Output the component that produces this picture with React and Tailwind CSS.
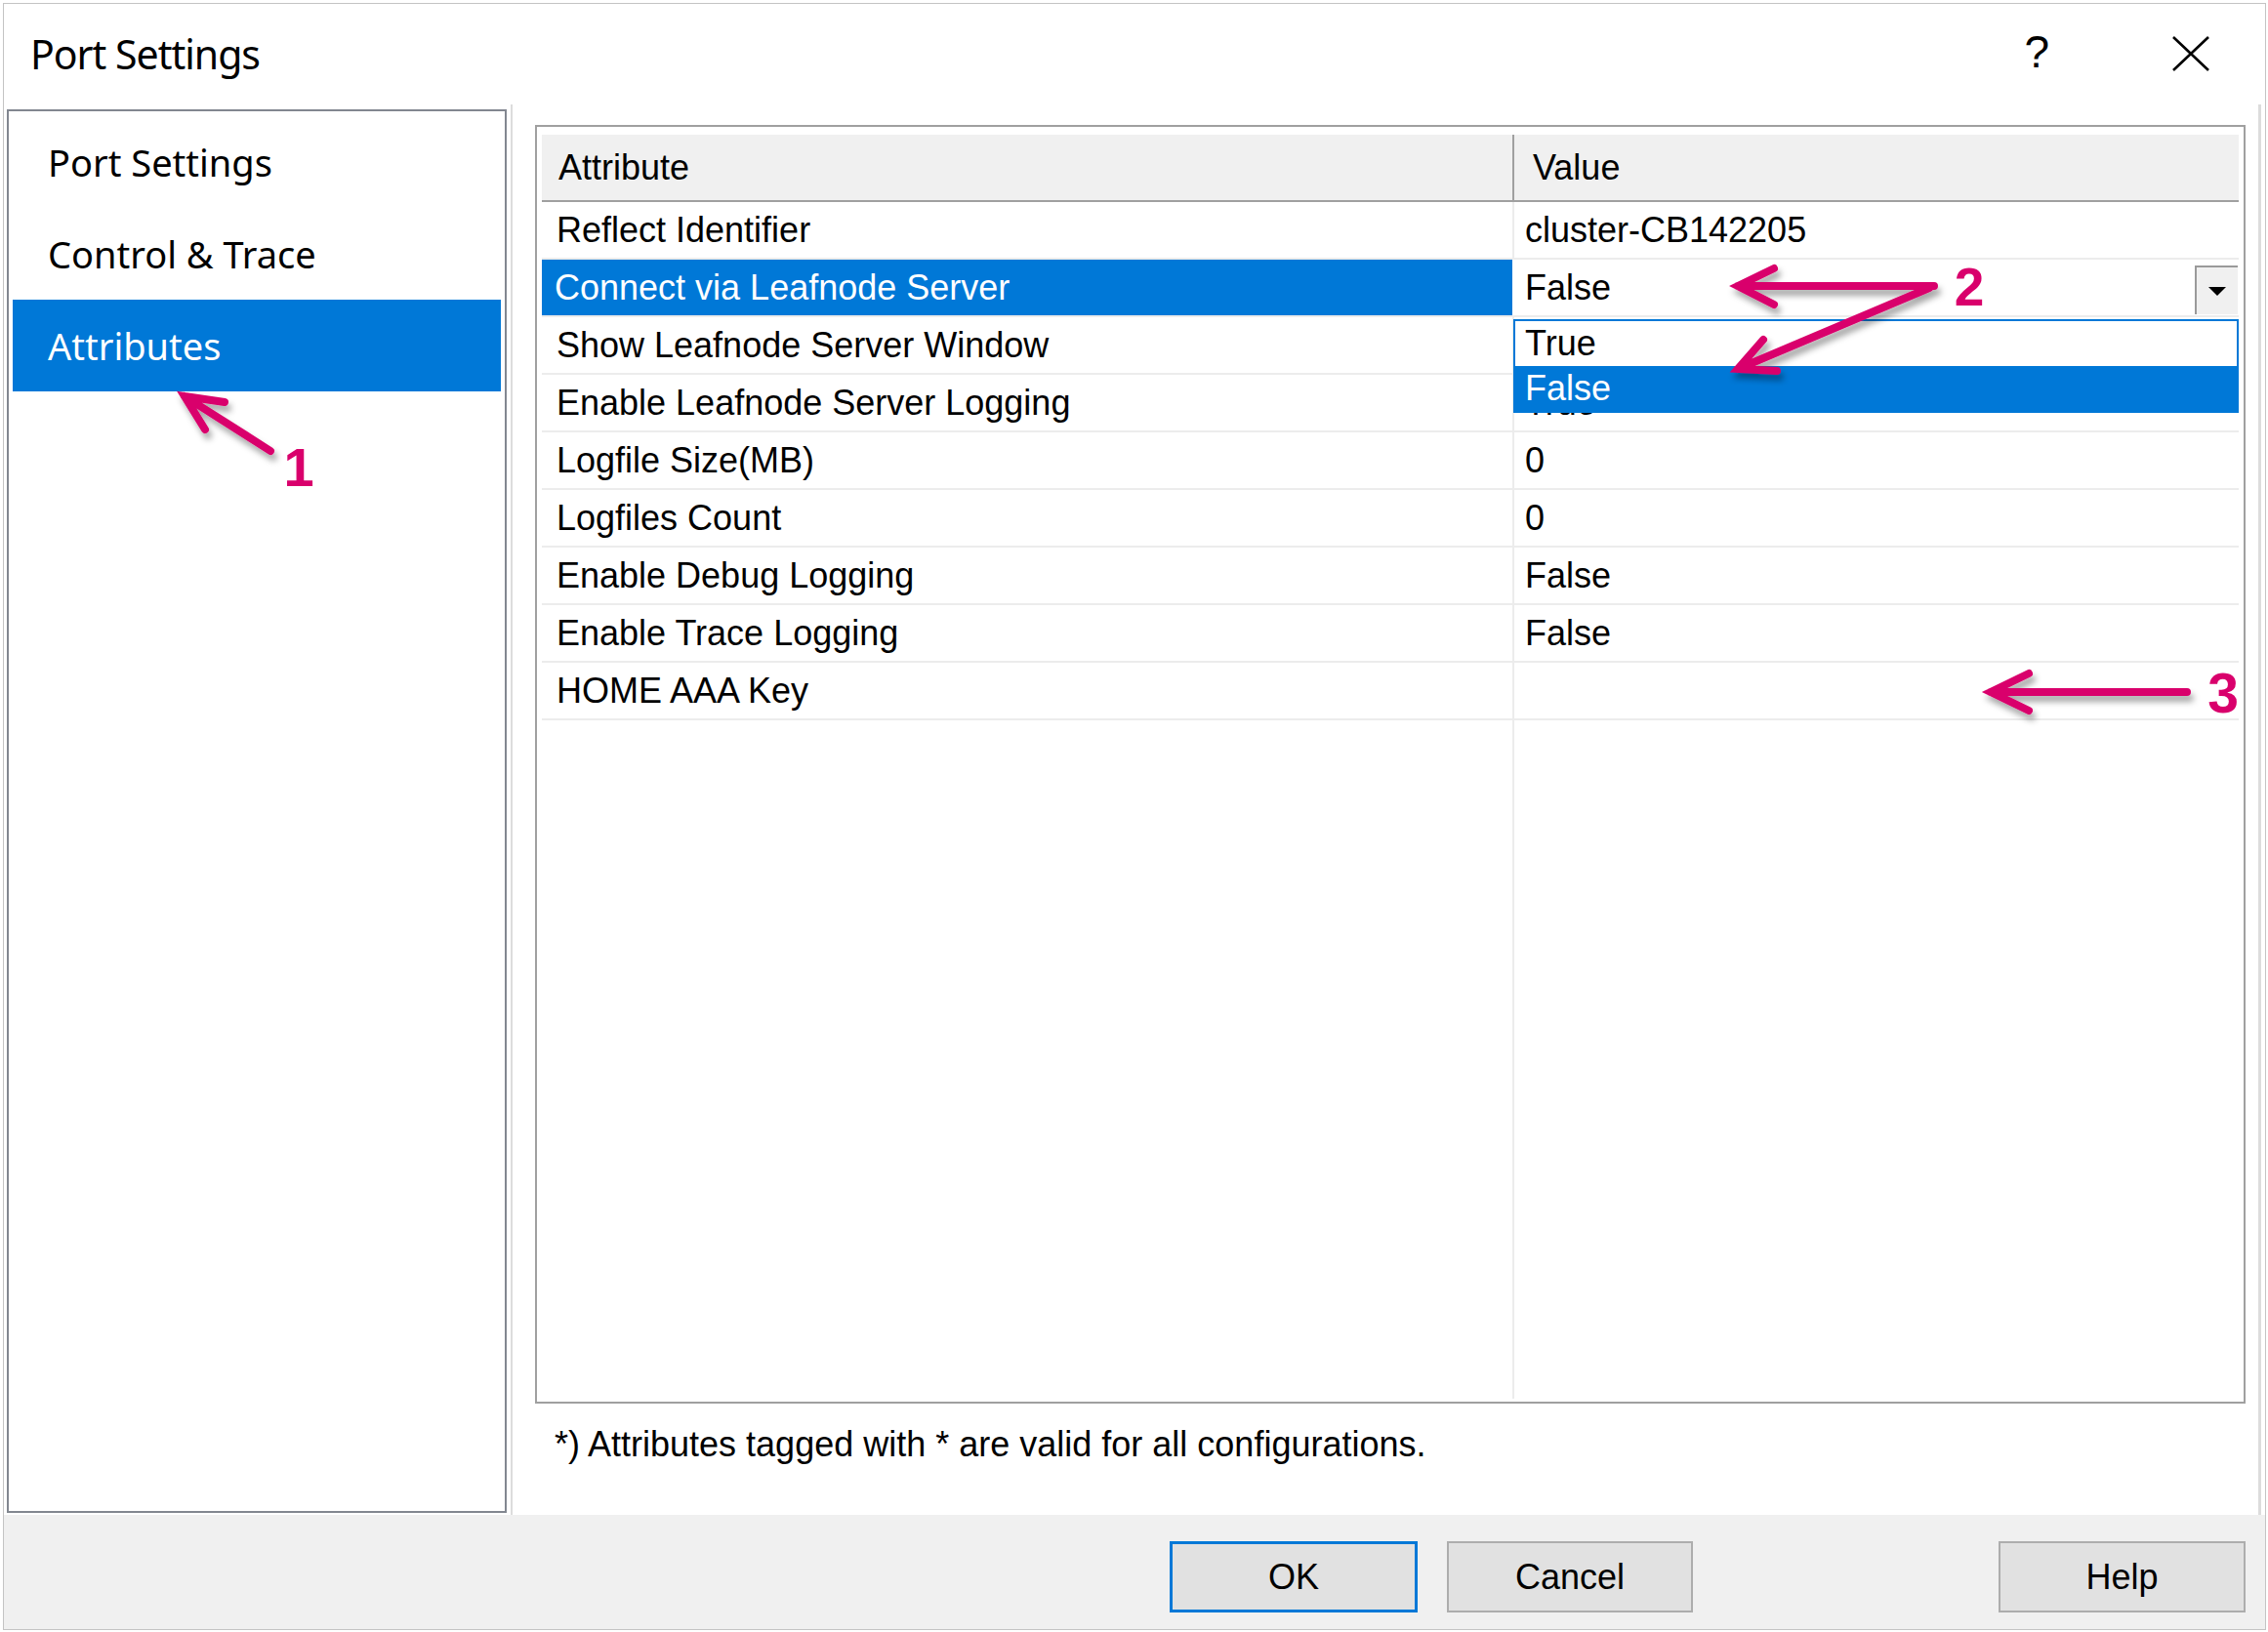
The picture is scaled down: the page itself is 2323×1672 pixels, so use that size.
import React from "react";

const rows = [
  { name: "Reflect Identifier", value: "cluster-CB142205" },
  { name: "Connect via Leafnode Server", value: "False", selected: true },
  { name: "Show Leafnode Server Window", value: "True" },
  { name: "Enable Leafnode Server Logging", value: "True" },
  { name: "Logfile Size(MB)", value: "0" },
  { name: "Logfiles Count", value: "0" },
  { name: "Enable Debug Logging", value: "False" },
  { name: "Enable Trace Logging", value: "False" },
  { name: "HOME AAA Key", value: "" },
];

const navItems = ["Port Settings", "Control & Trace", "Attributes"];

// annotation overlay (magenta arrows + numbers)
function Annotations() {
  return (
    <svg
      className="absolute inset-0 z-20 pointer-events-none"
      width="2323"
      height="1672"
      viewBox="0 0 2323 1672"
    >
      <defs>
        <filter id="shadow" filterUnits="userSpaceOnUse" x="0" y="0" width="2323" height="1672">
          <feDropShadow dx="3" dy="6" stdDeviation="3" floodColor="#000" floodOpacity="0.35" />
        </filter>
      </defs>
      <g
        stroke="#d9006c"
        strokeWidth="8"
        strokeLinecap="round"
        strokeLinejoin="miter"
        fill="none"
        filter="url(#shadow)"
      >
        <path d="M277 462 L189 406 M230 412 L189 406 L210 440" />
        <path d="M1981 293 L1780 293 M1817 275 L1780 293 L1817 312" />
        <path d="M1976 295 L1780 378 M1806 348 L1780 378 L1820 380" />
        <path d="M2240 709 L2039 709 M2078 690 L2039 709 L2078 728" />
      </g>
      <g
        fill="#d9006c"
        fontFamily="'Liberation Sans', Arial, sans-serif"
        fontWeight="700"
        textAnchor="middle"
      >
        <text x="306" y="498" fontSize="56">1</text>
        <text x="2017" y="313" fontSize="55">2</text>
        <text x="2277" y="730" fontSize="57">3</text>
      </g>
    </svg>
  );
}

export default function App() {
  return (
    <div className="relative w-[2323px] h-[1672px] bg-white pt-[3px] pl-[3px] pr-[2px] pb-[2px] font-['Liberation_Sans',Arial,sans-serif] text-black">
      <div className="h-[1667px] border border-[#c4c4c4] flex flex-col">
        {/* TITLE BAR */}
        <div className="h-[103px] flex items-center justify-between pl-[27px] pr-[57px]">
          <span className="font-['Noto_Sans',sans-serif] text-[41px] tracking-[-1px] leading-none">
            Port Settings
          </span>
          <div className="flex items-center gap-[126px]">
            <span className="text-[46px] leading-none mb-[6px]">?</span>
            <svg width="38" height="36" viewBox="0 0 38 36" className="mb-[2px]">
              <path d="M1 1 L37 35 M37 1 L1 35" stroke="#000" strokeWidth="2.6" fill="none" />
            </svg>
          </div>
        </div>

        {/* BODY */}
        <div className="h-[1445px] flex">
          {/* LEFT NAV */}
          <div className="mt-[5px] ml-[3px] w-[512px] h-[1438px] border-2 border-[#828790] bg-white pt-[5px] px-[4px] font-['Noto_Sans',sans-serif] text-[38px]">
            {navItems.map((item) => (
              <div
                key={item}
                className={
                  item === "Attributes"
                    ? "h-[94px] flex items-center pl-[36px] bg-[#0078d7] text-white"
                    : "h-[94px] flex items-center pl-[36px]"
                }
              >
                {item}
              </div>
            ))}
          </div>

          {/* RIGHT PANE */}
          <div className="ml-[4px] w-[1793px] h-full border-l-2 border-r-[3px] border-[#dcdcdc] pt-[21px] pl-[23px] pr-[13px] flex flex-col text-[36px]">
            <div className="h-[1310px] border-2 border-[#a0a0a0] pt-[8px] px-[5px] pb-[3px] flex flex-col">
              {/* header */}
              <div className="h-[69px] flex bg-[#f0f0f0] border-b-2 border-[#a0a0a0]">
                <div className="w-[996px] border-r-2 border-[#a0a0a0] pl-[17px] flex items-center">
                  Attribute
                </div>
                <div className="flex-1 pl-[19px] flex items-center">Value</div>
              </div>

              {/* rows */}
              <div className="flex-1 flex flex-col">
                {rows.map((r) => (
                  <div key={r.name} className="h-[59px] flex border-b-2 border-[#ececec]">
                    <div
                      className={
                        r.selected
                          ? "w-[996px] border-r-2 border-white pl-[13px] flex items-center bg-[#0078d7] text-white"
                          : "w-[996px] border-r-2 border-[#ececec] pl-[15px] flex items-center"
                      }
                    >
                      {r.name}
                    </div>
                    <div className="relative flex-1 pl-[11px] flex items-center">
                      {r.value}
                      {r.selected && (
                        <>
                          <div className="absolute right-[1px] top-[6px] w-[44px] h-[50px] border-l-2 border-t-2 border-[#9a9a9a] bg-[#f0f0f0] flex items-center justify-center">
                            <svg width="18" height="9" viewBox="0 0 18 9">
                              <path d="M0 0 L18 0 L9 9 Z" fill="#000" />
                            </svg>
                          </div>
                          <div className="absolute z-10 top-[61px] left-[-1px] right-0 border-2 border-[#0078d7] bg-white">
                            <div className="h-[46px] pl-[10px] flex items-center">True</div>
                            <div className="h-[46px] pl-[10px] flex items-center bg-[#0078d7] text-white">
                              False
                            </div>
                          </div>
                        </>
                      )}
                    </div>
                  </div>
                ))}
                <div className="flex-1 flex">
                  <div className="w-[996px] border-r-2 border-[#ececec]" />
                </div>
              </div>
            </div>

            <div className="mt-[21px] pl-[20px] leading-[42px]">
              *) Attributes tagged with * are valid for all configurations.
            </div>
          </div>
        </div>

        {/* FOOTER */}
        <div className="flex-1 bg-[#f0f0f0] flex items-start pt-[27px] text-[36px]">
          <button className="ml-[1194px] w-[254px] h-[73px] border-[3px] border-[#0078d7] bg-[#e1e1e1]">
            OK
          </button>
          <button className="ml-[30px] w-[252px] h-[73px] border-2 border-[#adadad] bg-[#e1e1e1]">
            Cancel
          </button>
          <button className="ml-[313px] w-[253px] h-[73px] border-2 border-[#adadad] bg-[#e1e1e1]">
            Help
          </button>
        </div>
      </div>

      <Annotations />
    </div>
  );
}
